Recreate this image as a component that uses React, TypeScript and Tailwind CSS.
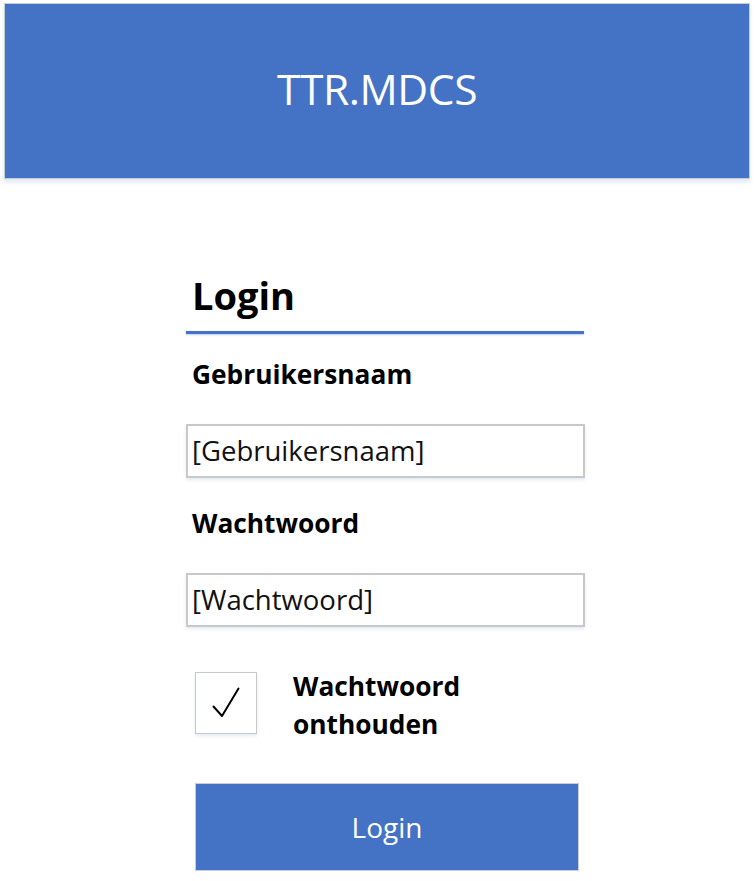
import React from "react";

export default function App() {
  const font = { fontFamily: '"Open Sans", "Noto Sans", sans-serif' };
  return (
    <div className="w-[755px] h-[881px] bg-white overflow-hidden" style={font}>
      <header className="mt-[3px] ml-[4px] w-[746px] h-[176px] bg-[#4472c4] border border-[#c9cdd6] shadow-[0_3px_4px_rgba(68,114,196,0.18)] flex items-center justify-center">
        <h1 className="text-[42.5px] leading-none text-white font-normal tracking-[-0.4px] mb-[4px]">TTR.MDCS</h1>
      </header>

      <main className="ml-[186px] w-[399px] flex flex-col">
        <h2 className="mt-[91px] h-[50px] leading-[50px] pl-[6px] text-[38px] font-bold text-black">Login</h2>
        <div className="mt-[11px] h-[3px] w-[398px] bg-[#4472c4] shadow-[0_1px_2px_rgba(68,114,196,0.35)]" />

        <label className="mt-[25px] h-[30px] leading-[30px] pl-[6px] text-[26.3px] font-bold text-black">Gebruikersnaam</label>
        <div className="mt-[35px] h-[54px] w-[399px] border-2 border-[#c8c8c8] shadow-[0_2px_3px_rgba(68,114,196,0.15)] flex items-center pl-[4px]">
          <span className="text-[27.5px] text-[#111] leading-none">[Gebruikersnaam]</span>
        </div>

        <label className="mt-[30px] h-[30px] leading-[30px] pl-[6px] text-[26.3px] font-bold text-black">Wachtwoord</label>
        <div className="mt-[35px] h-[54px] w-[399px] border-2 border-[#c8c8c8] shadow-[0_2px_3px_rgba(68,114,196,0.15)] flex items-center pl-[4px]">
          <span className="text-[27.5px] text-[#111] leading-none">[Wachtwoord]</span>
        </div>

        <div className="mt-[45px] ml-[9px] h-[62px] flex items-start">
          <div className="shrink-0 w-[62px] h-[62px] border border-[#c8c8c8] shadow-[0_2px_3px_rgba(68,114,196,0.15)]">
            <svg width="60" height="60" viewBox="0 0 60 60" fill="none">
              <path d="M17.5 33.5 L26 43 L42.5 15.5" stroke="#000" strokeWidth="2" strokeLinecap="round" strokeLinejoin="round" />
            </svg>
          </div>
          <div className="ml-[36px] -mt-[5px] text-[26.3px] leading-[38px] font-bold text-black">
            <div>Wachtwoord</div>
            <div>onthouden</div>
          </div>
        </div>

        <button className="mt-[49px] ml-[9px] w-[384px] h-[88px] bg-[#4472c4] border border-[#c9cdd6] text-white text-[28px] font-normal flex items-center justify-center">
          Login
        </button>
      </main>
    </div>
  );
}
